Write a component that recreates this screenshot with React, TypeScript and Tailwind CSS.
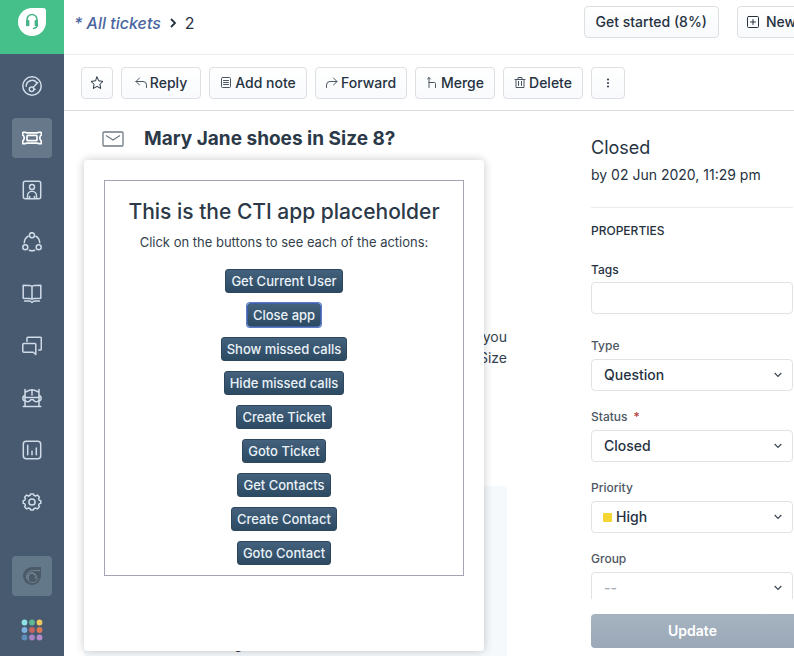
import type { ReactNode } from "react";
import clsx from "clsx";

function Icon({ children, size = 20 }: { children: ReactNode; size?: number }) {
  return (
    <svg
      width={size}
      height={size}
      viewBox={`0 0 ${size} ${size}`}
      fill="none"
      stroke="currentColor"
      strokeWidth={size === 20 ? 1.5 : 1}
      strokeLinecap="round"
      strokeLinejoin="round"
      aria-hidden="true"
      className="shrink-0"
    >
      {children}
    </svg>
  );
}

const navItems: { label: string; active?: boolean; icon: ReactNode }[] = [
  {
    label: "Dashboard",
    icon: (
      <>
        <circle cx="10" cy="10" r="9.2" />
        <path d="M4.2 10.2A5.9 5.9 0 0 1 14.6 6.4" />
        <circle cx="9.6" cy="13.3" r="2.3" />
        <path d="M11 11.500L15.800 6.600" />
        <path d="M11.900 13.200h1.200" />
      </>
    ),
  },
  {
    label: "Tickets",
    active: true,
    icon: (
      <>
        <path
          strokeWidth="1.7"
          d="M1.300 4.300h2.200l.8.600h11.400l.8-.600h2.200c.4 0 .6.300.6.600v2.200c-1 .500-1.500 1.500-1.500 2.900s.500 2.400 1.500 2.900v2.200c0 .300-.200.600-.600.600h-2.200l-.8-.600H4.300l-.8.600H1.300c-.400 0-.600-.300-.600-.600v-2.200c1-.500 1.500-1.500 1.500-2.900S1.700 7.600.700 7.100V4.900c0-.300.200-.600.600-.600z"
        />
        <rect x="5" y="7.300" width="10" height="5.400" rx="1" strokeWidth="1.700" />
      </>
    ),
  },
  {
    label: "Contacts",
    icon: (
      <>
        <rect x="1.300" y="1.300" width="17.400" height="17.400" rx="2" />
        <circle cx="10" cy="6.900" r="2.500" />
        <path d="M5.500 18.500v-2.700a4.500 4.500 0 0 1 9 0v2.700M7.600 18.500v-2M12.400 18.500v-2" />
      </>
    ),
  },
  {
    label: "Social",
    icon: (
      <>
        <circle cx="10" cy="3.200" r="2.500" />
        <circle cx="3.300" cy="15.300" r="2.500" />
        <circle cx="16.700" cy="15.300" r="2.500" />
        <path d="M6.200 4.200a8 8 0 0 0-3.900 6.600M13.800 4.200a8 8 0 0 1 3.900 6.600M7.300 18.200a8 8 0 0 0 5.400 0" />
      </>
    ),
  },
  {
    label: "Solutions",
    icon: (
      <>
        <path d="M10 2.300C9 1.300 6 1.300 1.200 1.300v13c4.800 0 7.800 0 8.800 1 1-1 4-1 8.800-1v-13c-4.800 0-7.800 0-8.800 1zM10 2.300v13" />
        <path d="M2.500 17h4.800c1.200 0 1.800.500 2.700 1.400.900-.900 1.500-1.400 2.700-1.400h4.800" />
      </>
    ),
  },
  {
    label: "Forums",
    icon: (
      <>
        <path d="M5 5.500V2.200c0-.600.400-1 1-1h12.300c.600 0 1 .400 1 1V13c0 .600-.400 1-1 1h-1.500" />
        <path d="M1.800 7.600h11c.600 0 1 .400 1 1v9.900l-2.600-2.200H1.800c-.600 0-1-.400-1-1V8.600c0-.600.400-1 1-1z" />
      </>
    ),
  },
  {
    label: "Bots",
    icon: (
      <>
        <path d="M3 18.300V1.500M17 18.300V1.500M1.200 18.500h17.600M3 4.300C5.500 3 7.500 1.700 10 1.700s4.500 1.300 7 2.600M10 1.700v5.300" />
        <path d="M3 8H1.700c-.9 1.200-.9 3.300 0 4.500H3M17 8h1.300c.9 1.200.9 3.300 0 4.500H17M3 9.500h14" />
        <path d="M3 12.500c1.500 1.600 4.300 1.600 5.300-.200.700-1 2.700-1 3.400 0 1 1.800 3.800 1.800 5.300.200" />
      </>
    ),
  },
  {
    label: "Analytics",
    icon: (
      <>
        <rect x="1.300" y="1.300" width="17.400" height="17.400" rx="3" />
        <path d="M5.700 5.300v9.400M10 11.300v3.400M14.300 8v6.700" />
      </>
    ),
  },
  {
    label: "Admin",
    icon: (
      <>
        <circle cx="10" cy="10" r="3.100" />
        <path d="M8.200 3.200l.4-1.300h2.800l.4 1.300 1.700.8 1.900-.9 2 2.100-.8 1.500.7 1.500 1.500.4v2.800l-1.500.4-.7 1.500.8 1.500-2 2.100-1.900-.9-1.700.8-.4 1.300H8.600l-.4-1.300-1.700-.8-1.900.9-2-2.100.8-1.500-.7-1.500-1.500-.4V8.600l1.500-.4.7-1.500-.8-1.500 2-2.100 1.900.9z" />
      </>
    ),
  },
];

const appDots = [
  "#8fe3e6", "#5fb894", "#edc861",
  "#7eb1e0", "#c56460", "#d97a55",
  "#5e8dbd", "#a984c4", "#b58acb",
];

function Sidebar() {
  return (
    <nav className="flex w-16 shrink-0 flex-col bg-[#475a70]" aria-label="Main">
      <a href="#home" aria-label="Home" className="flex h-[54px] shrink-0 justify-center bg-[#45c08a] pt-2">
        <svg width="28" height="28" viewBox="0 0 28 28" aria-hidden="true">
          <path d="M14 0h11a3 3 0 0 1 3 3v11A14 14 0 1 1 14 0z" fill="#fff" />
          <path d="M9 14v-2.500a5 5 0 0 1 10 0V14M19.300 16.500c0 2.500-1.200 3.700-3.800 3.900" fill="none" stroke="#45b589" strokeWidth="1.500" strokeLinecap="round" />
          <rect x="8" y="12" width="3.400" height="6.200" rx="1" fill="#45b589" />
          <rect x="16.600" y="12" width="3.400" height="6.200" rx="1" fill="#45b589" />
        </svg>
      </a>
      <div className="flex flex-col items-center gap-3 pt-3">
        {navItems.map((item) => (
          <button
            key={item.label}
            type="button"
            aria-label={item.label}
            className={clsx(
              "flex size-10 items-center justify-center rounded",
              item.active ? "bg-[#66788a] text-white" : "text-[#cfdbe8]",
            )}
          >
            <Icon>{item.icon}</Icon>
          </button>
        ))}
      </div>
      <div className="mt-auto flex flex-col items-center gap-3.5 pb-1.5">
        <button type="button" aria-label="Phone" className="flex size-10 items-center justify-center rounded bg-[#637889]">
          <svg width="18" height="18" viewBox="0 0 18 18" aria-hidden="true">
            <path d="M9 0h9v9a9 9 0 1 1-9-9z" fill="#4c5966" />
            <path d="M17 3.500H9.500a6 6 0 1 0 5.800 7.500" fill="none" stroke="#718391" strokeWidth="1" />
            <path d="M6 12.500a3.900 3.900 0 1 1 6.300-.600" fill="none" stroke="#718391" strokeWidth="1.500" />
          </svg>
        </button>
        <button type="button" aria-label="Switch product" className="flex size-10 items-center justify-center">
          <svg width="22" height="22" viewBox="0 0 22 22" aria-hidden="true">
            {appDots.map((color, i) => (
              <circle key={i} cx={3.5 + (i % 3) * 7.5} cy={3.5 + Math.floor(i / 3) * 7.5} r="2.9" fill={color} />
            ))}
          </svg>
        </button>
      </div>
    </nav>
  );
}

const outlineButton =
  "flex h-8 shrink-0 items-center rounded border border-[#dcdfe4] bg-gradient-to-b from-white to-[#f8fafc] text-sm font-medium whitespace-nowrap text-[#26323f]";

function Header() {
  return (
    <header className="flex h-[55px] shrink-0 justify-between overflow-hidden border-b border-[#ebeef0] pl-2.5">
      <div className="flex h-[46px] items-center gap-2 text-base text-[#26323f]">
        <a href="#tickets" className="font-medium text-[#4a66a0] italic">
          * All tickets
        </a>
        <svg width="8" height="10" viewBox="0 0 8 10" fill="none" stroke="currentColor" strokeWidth="1.800" aria-hidden="true">
          <path d="M2 1l4 4-4 4" />
        </svg>
        <span>2</span>
      </div>
      <div className="-mr-6 flex gap-[18px] pt-1.5">
        <button type="button" className={clsx(outlineButton, "px-[11px]")}>
          Get started (8%)
        </button>
        <button type="button" className={clsx(outlineButton, "w-[81px] gap-1.5 px-2")}>
          <Icon size={14}>
            <rect x="1.500" y="1.500" width="11" height="11" rx="1" />
            <path d="M7 4.500v5M4.500 7h5" />
          </Icon>
          New
        </button>
      </div>
    </header>
  );
}

const actions: { label: string; width: string; icon: ReactNode }[] = [
  { label: "Reply", width: "w-20", icon: <path d="M4.500 1L1 4.500 4.500 8M1 4.500h7A3.500 3.500 0 0 1 11.500 8v2.500" /> },
  {
    label: "Add note",
    width: "w-[98px]",
    icon: (
      <>
        <rect x="1.500" y=".5" width="9" height="10" rx="1" />
        <path d="M3.500 3.500h5M3.500 5.500h5M3.500 7.500h5" />
      </>
    ),
  },
  { label: "Forward", width: "w-[92px]", icon: <path d="M7.500 1L11 4.500 7.500 8M11 4.500H4A3.500 3.500 0 0 0 .5 8v2.500" /> },
  { label: "Merge", width: "w-20", icon: <path d="M1.500 2L3 .5 4.500 2M3 .5v10M3 5.500h5.500a1 1 0 0 1 1 1v4" /> },
  {
    label: "Delete",
    width: "w-20",
    icon: <path d="M1 2.500h10M4 2.500v-2h4v2M2 2.500v8h8v-8M4.500 4.500v4M7.500 4.500v4" />,
  },
];

function Toolbar() {
  return (
    <div className="flex h-14 shrink-0 items-center gap-2 border-b border-[#d9dde1] pl-[17px]">
      <button type="button" aria-label="Star" className={clsx(outlineButton, "w-8 justify-center")}>
        <Icon size={14}>
          <path d="M7 1l1.800 3.900 4.200.500-3.100 2.900.800 4.200L7 10.400l-3.700 2.100.800-4.200L1 5.400l4.200-.500z" />
        </Icon>
      </button>
      {actions.map((a) => (
        <button key={a.label} type="button" className={clsx(outlineButton, a.width, "justify-center gap-[3px]")}>
          <span className="text-[#4c5763]">
            <Icon size={12}>{a.icon}</Icon>
          </span>
          {a.label}
        </button>
      ))}
      <button type="button" aria-label="More" className={clsx(outlineButton, "w-[34px] justify-center")}>
        <svg width="4" height="10" viewBox="0 0 4 10" fill="currentColor" aria-hidden="true">
          <circle cx="2" cy="1.500" r="1" />
          <circle cx="2" cy="5" r="1" />
          <circle cx="2" cy="8.500" r="1" />
        </svg>
      </button>
    </div>
  );
}

const ctiActions = [
  "Get Current User",
  "Close app",
  "Show missed calls",
  "Hide missed calls",
  "Create Ticket",
  "Goto Ticket",
  "Get Contacts",
  "Create Contact",
  "Goto Contact",
];

function CtiPopup() {
  return (
    <section className="absolute top-[49px] left-5 w-[400px] rounded bg-white px-5 pt-5 pb-[75px] shadow-[0_0_10px_rgba(0,0,0,0.22)]">
      <div className="flex flex-col items-center border border-[#a3a5b5] pt-[15px] pb-[10px]">
        <h2 className="text-[21px] leading-8 font-medium text-[#2b3948]">This is the CTI app placeholder</h2>
        <p className="mt-1 text-[13px] leading-5 text-[#333f4c]">Click on the buttons to see each of the actions:</p>
        <div className="mt-[17px] flex flex-col items-center gap-2.5">
          {ctiActions.map((label) => (
            <button
              key={label}
              type="button"
              className={clsx(
                "h-6 rounded-[3px] border bg-gradient-to-b from-[#44617d] to-[#2c4a62] px-[5px] text-[13px] leading-5 font-medium text-[#eaf2f8]",
                label === "Close app" ? "border-[#3f5fa8] ring-1 ring-[#5f7dc0]" : "border-[#2d475e]",
              )}
            >
              {label}
            </button>
          ))}
        </div>
      </div>
    </section>
  );
}

function Conversation() {
  return (
    <div className="relative min-w-0 flex-1 overflow-hidden text-sm text-[#333f4c]">
      <div className="flex h-14 items-center gap-5 pl-[38px]">
        <svg width="22" height="16" viewBox="0 0 22 16" fill="none" stroke="#6f7a85" strokeWidth="1.300" aria-hidden="true">
          <rect x="1" y="1" width="20" height="14" rx="1" />
          <path d="M4 4.500l7 4.500 7-4.500" />
        </svg>
        <h1 className="text-[19px] font-bold whitespace-nowrap text-[#2b3948]">Mary Jane shoes in Size 8?</h1>
      </div>
      <p className="mt-[159px] flex w-[443px] flex-col items-end leading-[21px]">
        <span>you</span>
        <span>Size</span>
      </p>
      <div className="mt-[118px] ml-5 flex h-[180px] w-[423px] items-end rounded bg-[#f6f9fc] pb-3 pl-[150px]">g</div>
      <CtiPopup />
    </div>
  );
}

function SelectField({
  id,
  label,
  value,
  required,
  swatch,
  muted,
}: {
  id: string;
  label: string;
  value: string;
  required?: boolean;
  swatch?: boolean;
  muted?: boolean;
}) {
  return (
    <div>
      <label htmlFor={id} className="block text-xs leading-4 font-medium text-[#4c5763]">
        {label}
        {required && <span className="ml-1.5 text-[#b5403c]">*</span>}
      </label>
      <div className="relative mt-[5px]">
        <select
          id={id}
          defaultValue={value}
          className={clsx(
            "block h-8 w-full appearance-none rounded border border-[#dfe2e6] bg-white text-sm font-medium",
            swatch ? "pl-6" : "pl-3",
            muted ? "text-[#a5adb5]" : "text-[#26323f]",
          )}
        >
          <option>{value}</option>
        </select>
        {swatch && <span className="absolute top-3 left-3 size-[9px] rounded-[1px] bg-[#f5d531]" />}
        <svg width="8" height="6" viewBox="0 0 8 6" fill="none" stroke="#3b4754" strokeWidth="1.200" className="pointer-events-none absolute top-[13px] right-[11px]" aria-hidden="true">
          <path d="M.7 1L4 4.300 7.300 1" />
        </svg>
      </div>
    </div>
  );
}

function Properties() {
  return (
    <aside className="flex w-[203px] shrink-0 flex-col pt-6 text-[#26323f]">
      <div className="min-h-0 flex-1 overflow-hidden pr-px">
        <h2 className="text-lg leading-[26px]">Closed</h2>
        <p className="mt-1 text-sm leading-5 whitespace-nowrap">by 02 Jun 2020, 11:29 pm</p>
        <hr className="mt-[22px] border-[#e9ecef]" />
        <h3 className="mt-[15px] text-xs leading-4 font-medium">PROPERTIES</h3>
        <label htmlFor="tags" className="mt-[23px] block text-xs leading-4 font-medium">
          Tags
        </label>
        <input id="tags" type="text" className="mt-1 block h-8 w-full rounded border border-[#dfe2e6] px-3 text-sm" />
        <div className="mt-6 flex flex-col gap-[18px]">
          <SelectField id="type" label="Type" value="Question" />
          <SelectField id="status" label="Status" value="Closed" required />
          <SelectField id="priority" label="Priority" value="High" swatch />
          <SelectField id="group" label="Group" value="--" muted />
        </div>
      </div>
      <div className="mt-[15px] mb-2 flex shrink-0">
        <button type="button" className="h-[34px] flex-1 rounded-l bg-gradient-to-b from-[#a6b3c1] to-[#9aa8b7] text-sm font-semibold text-white">
          Update
        </button>
      </div>
    </aside>
  );
}

export default function App() {
  return (
    <div className="flex h-screen overflow-hidden bg-white font-['Inter','Liberation_Sans',sans-serif]">
      <Sidebar />
      <div className="flex min-w-0 flex-1 flex-col">
        <Header />
        <Toolbar />
        <main className="flex min-h-0 flex-1">
          <Conversation />
          <Properties />
        </main>
      </div>
    </div>
  );
}
